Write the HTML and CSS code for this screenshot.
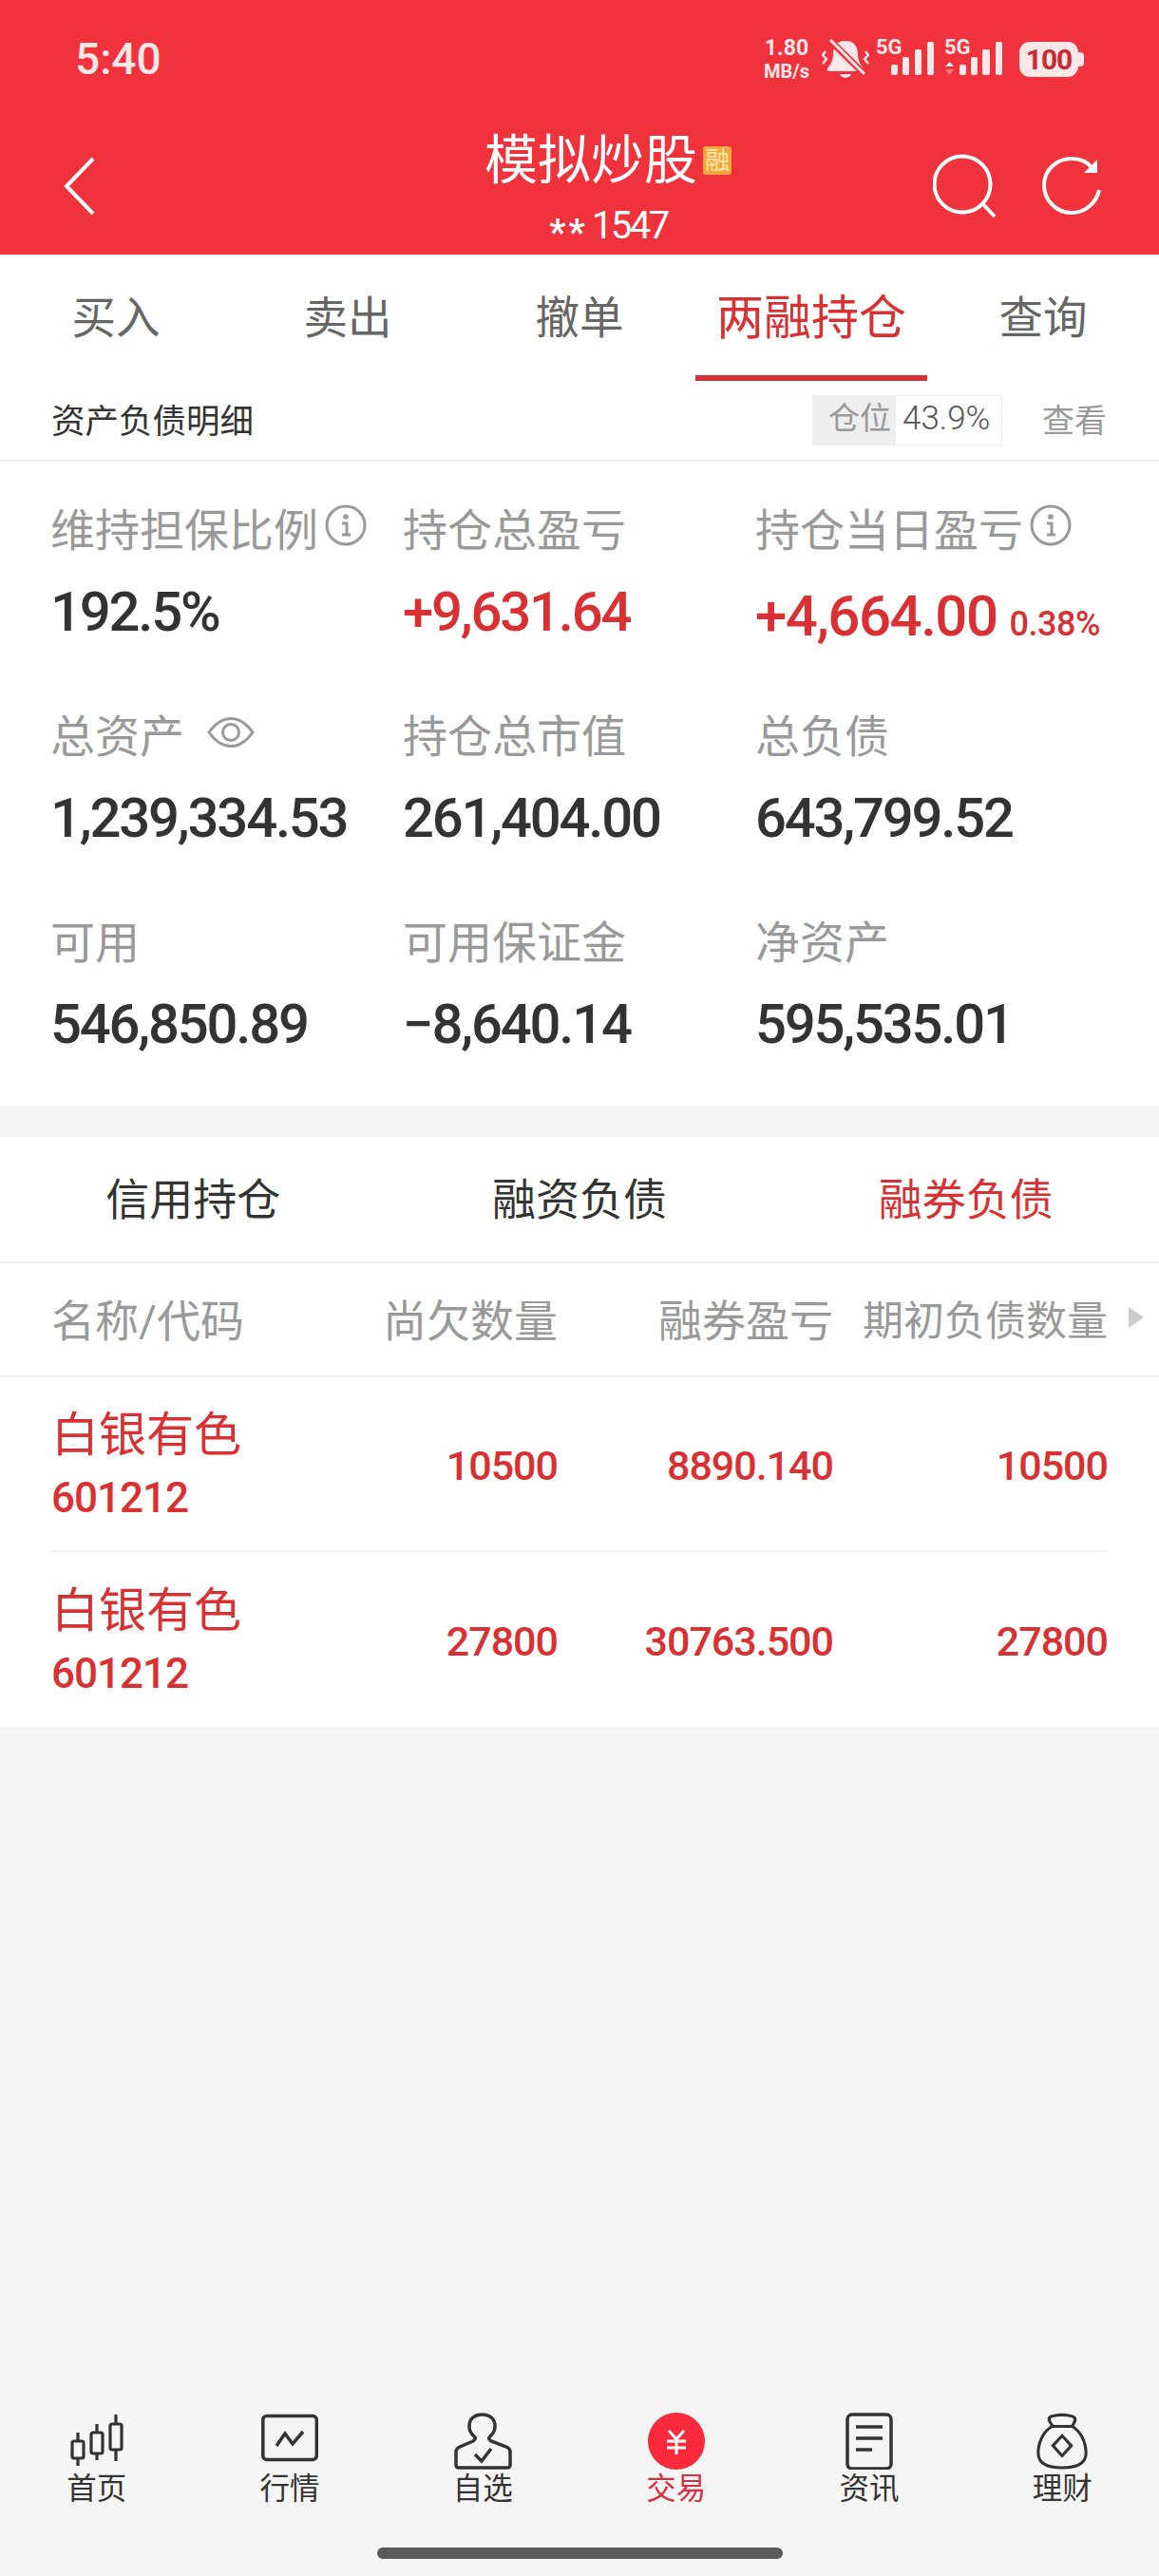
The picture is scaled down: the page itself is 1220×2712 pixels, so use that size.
FILE: index.html
```html
<!DOCTYPE html>
<html lang="zh-CN">
<head>
    <meta charset="UTF-8">
    <title>模拟炒股</title>
    <link rel="stylesheet" href="styles.css">
</head>
<body>
    <header class="top">
        <div class="status">
            <span class="time">5:40</span>
            <div class="status-icons">
                <div class="speed"><span class="speed-num">1.80</span><span class="speed-unit">MB/s</span></div>
                <svg class="bell" width="50" height="42" viewBox="0 0 50 42">
                    <path d="M25 2C16 2 12 8 12 16C12 23 9 27 6 31C5 33 6 34 8 34H42C44 34 45 33 44 31C41 27 38 23 38 16C38 8 34 2 25 2Z" fill="#ffe6e7"/>
                    <path d="M19 37H31C30 42 20 42 19 37Z" fill="#ffe6e7"/>
                    <path d="M7 0L47 39" stroke="#f0323c" stroke-width="7"/>
                    <path d="M9 1L45 37" stroke="#ffe6e7" stroke-width="3"/>
                    <path d="M4 13L1 17L5 21L1 26" stroke="#ffe6e7" stroke-width="2.400" fill="none"/>
                    <path d="M46 13L49 17L45 21L49 26" stroke="#ffe6e7" stroke-width="2.400" fill="none"/>
                </svg>
                <svg class="signal" width="62" height="46" viewBox="0 0 62 46">
                    <text x="0" y="21" class="sig-text">5G</text>
                    <rect x="16" y="32" width="7" height="11" rx="2"/>
                    <rect x="28" y="24" width="7" height="19" rx="2"/>
                    <rect x="41" y="16" width="7" height="27" rx="2"/>
                    <rect x="54" y="8" width="7" height="35" rx="2"/>
                </svg>
                <svg class="signal" width="62" height="46" viewBox="0 0 62 46">
                    <text x="0" y="21" class="sig-text">5G</text>
                    <path d="M1 34L5.500 29L10 34Z"/>
                    <path d="M1 37L5.500 43L10 37Z" opacity="0.45"/>
                    <rect x="16" y="32" width="7" height="11" rx="2"/>
                    <rect x="28" y="24" width="7" height="19" rx="2"/>
                    <rect x="40" y="16" width="8" height="27" rx="2"/>
                    <rect x="54" y="8" width="7" height="35" rx="2"/>
                </svg>
                <div class="battery"><span class="battery-num">100</span></div>
            </div>
        </div>
        <div class="navbar">
            <svg class="back" width="34" height="62" viewBox="0 0 34 62">
                <path d="M31 2L3 31L31 60" fill="none" stroke="#fff" stroke-width="4"/>
            </svg>
            <div class="title-block">
                <div class="title-row">
                    <span class="title">模拟炒股</span>
                    <span class="badge">融</span>
                </div>
                <div class="account"><span class="mask">**</span>1547</div>
            </div>
            <div class="nav-actions">
                <svg width="68" height="68" viewBox="0 0 68 68">
                    <circle cx="31" cy="32" r="29.500" fill="none" stroke="#fff" stroke-width="4"/>
                    <path d="M53 53L65 66" stroke="#fff" stroke-width="4"/>
                </svg>
                <svg width="64" height="66" viewBox="0 0 64 66">
                    <path d="M61 38C58 52 46 62 32 62C16 62 3 49 3 33C3 17 16 5 32 5C41 5 49 9 54 15" fill="none" stroke="#fff" stroke-width="4"/>
                    <path d="M59 6V20H45Z" fill="#fff"/>
                </svg>
            </div>
        </div>
    </header>

    <nav class="tabs">
        <a class="tab">买入</a>
        <a class="tab">卖出</a>
        <a class="tab">撤单</a>
        <a class="tab tab-on">两融持仓</a>
        <a class="tab">查询</a>
    </nav>

    <section class="assets">
        <div class="assets-head">
            <span class="assets-title">资产负债明细</span>
            <div class="position">
                <span class="position-label">仓位</span>
                <span class="position-value">43.9%</span>
            </div>
            <span class="view">查看</span>
        </div>
        <div class="stats">
            <div class="stat">
                <div class="label">维持担保比例
                    <svg class="info" width="44" height="44" viewBox="0 0 44 44">
                        <circle cx="22" cy="22" r="20" fill="none" stroke="#999" stroke-width="3"/>
                        <circle cx="22" cy="13" r="2.800" fill="#999"/>
                        <path d="M18 20H23V31M18 32H27" fill="none" stroke="#999" stroke-width="3"/>
                    </svg>
                </div>
                <div class="value">192.5%</div>
            </div>
            <div class="stat">
                <div class="label">持仓总盈亏</div>
                <div class="value up">+9,631.64</div>
            </div>
            <div class="stat">
                <div class="label">持仓当日盈亏
                    <svg class="info" width="44" height="44" viewBox="0 0 44 44">
                        <circle cx="22" cy="22" r="20" fill="none" stroke="#999" stroke-width="3"/>
                        <circle cx="22" cy="13" r="2.800" fill="#999"/>
                        <path d="M18 20H23V31M18 32H27" fill="none" stroke="#999" stroke-width="3"/>
                    </svg>
                </div>
                <div class="value up value-today">+4,664.00<span class="percent">0.38%</span></div>
            </div>
            <div class="stat">
                <div class="label">总资产
                    <svg class="eye" width="50" height="34" viewBox="0 0 50 34">
                        <path d="M2 17C9 7 16 2.500 25 2.500C34 2.500 41 7 48 17C41 27 34 31.500 25 31.500C16 31.500 9 27 2 17Z" fill="none" stroke="#999" stroke-width="3"/>
                        <circle cx="25" cy="17" r="8.500" fill="none" stroke="#999" stroke-width="3"/>
                    </svg>
                </div>
                <div class="value">1,239,334.53</div>
            </div>
            <div class="stat">
                <div class="label">持仓总市值</div>
                <div class="value">261,404.00</div>
            </div>
            <div class="stat">
                <div class="label">总负债</div>
                <div class="value">643,799.52</div>
            </div>
            <div class="stat">
                <div class="label">可用</div>
                <div class="value">546,850.89</div>
            </div>
            <div class="stat">
                <div class="label">可用保证金</div>
                <div class="value">−8,640.14</div>
            </div>
            <div class="stat">
                <div class="label">净资产</div>
                <div class="value">595,535.01</div>
            </div>
        </div>
    </section>

    <section class="holdings">
        <div class="subtabs">
            <a class="subtab">信用持仓</a>
            <a class="subtab">融资负债</a>
            <a class="subtab subtab-on">融券负债</a>
        </div>
        <div class="row row-head">
            <span>名称/代码</span>
            <span class="num">尚欠数量</span>
            <span class="num">融券盈亏</span>
            <span class="num last-head">期初负债数量</span>
            <i class="more"></i>
        </div>
        <div class="row row-item">
            <div class="stock">
                <div class="stock-name">白银有色</div>
                <div class="stock-code">601212</div>
            </div>
            <span class="num">10500</span>
            <span class="num">8890.140</span>
            <span class="num">10500</span>
        </div>
        <div class="row row-item">
            <div class="stock">
                <div class="stock-name">白银有色</div>
                <div class="stock-code">601212</div>
            </div>
            <span class="num">27800</span>
            <span class="num">30763.500</span>
            <span class="num">27800</span>
        </div>
    </section>

    <footer class="bottom">
        <nav class="dock">
            <a class="dock-item">
                <svg width="60" height="60" viewBox="0 0 60 60" fill="none" stroke="#333" stroke-width="3.200">
                    <path d="M10 21V30M10 48V56M30 12V21M30 43V50M50 2V12M50 39V51"/>
                    <rect x="4" y="30" width="12" height="18" rx="2"/>
                    <rect x="24" y="21" width="12" height="22" rx="2"/>
                    <rect x="44" y="12" width="12" height="27" rx="2"/>
                </svg>
                <span>首页</span>
            </a>
            <a class="dock-item">
                <svg width="60" height="60" viewBox="0 0 60 60" fill="none" stroke="#333" stroke-width="3.500">
                    <rect x="1.800" y="3.500" width="56.500" height="46" rx="4"/>
                    <path d="M16 35L25 22L33 33L44 20"/>
                </svg>
                <span>行情</span>
            </a>
            <a class="dock-item">
                <svg width="63" height="60" viewBox="0 0 63 60" fill="none" stroke="#333" stroke-width="3.500">
                    <path d="M3 55V41Q3 38 7 36L21 30Q24 28 23 26Q17 21 17 15V14C17 6 23 2 30.500 2C38 2 44 6 44 14V15Q44 21 38 26Q37 28 40 30L56 36Q60 38 60 41V55Q60 58 57 58H6Q3 58 3 55Z"/>
                    <path d="M23 44L30 51L40 38"/>
                </svg>
                <span>自选</span>
            </a>
            <a class="dock-item dock-on">
                <svg width="60" height="60" viewBox="0 0 60 60">
                    <circle cx="30" cy="30" r="30" fill="#f92a3b"/>
                    <path d="M22 19L30 28L38 19M20 30H40M20 37H40M30 28V44" fill="none" stroke="#fff" stroke-width="3"/>
                </svg>
                <span>交易</span>
            </a>
            <a class="dock-item">
                <svg width="60" height="60" viewBox="0 0 60 60" fill="none" stroke="#333" stroke-width="3.500">
                    <rect x="7" y="2" width="46" height="57" rx="5"/>
                    <path d="M16 15H44M16 27H44M16 39H33"/>
                </svg>
                <span>资讯</span>
            </a>
            <a class="dock-item">
                <svg width="60" height="60" viewBox="0 0 60 62" fill="none" stroke="#333" stroke-width="3.200">
                    <path d="M19 15C10 20 4 32 4 44C4 56 14 60 30 60C46 60 56 56 56 44C56 32 50 20 41 15Z"/>
                    <path d="M20 15L16 9Q15 5 19 4Q30 1 41 4Q45 5 44 9L41 15"/>
                    <path d="M30 25L40 36L30 47L20 36Z"/>
                </svg>
                <span>理财</span>
            </a>
        </nav>
        <div class="home-bar"></div>
    </footer>
</body>
</html>
```

FILE: styles.css
```css
* {
    box-sizing: border-box;
}
html, body {
    margin: 0;
    padding: 0;
}
body {
    width: 1220px;
    height: 2712px;
    display: flex;
    flex-direction: column;
    overflow: hidden;
    background-color: #f5f5f5;
    font-family: Roboto, "Noto Sans CJK SC", sans-serif;
    color: #333;
}

/* header */
.top {
    height: 268px;
    background-color: #f0323c;
    color: #fff;
}
.status {
    height: 124px;
    display: flex;
    justify-content: space-between;
    align-items: center;
    padding: 0 79px 0 79px;
}
.time {
    font-size: 46px;
    font-weight: 500;
    color: #ffe6e7;
}
.status-icons {
    display: flex;
    align-items: center;
    color: #ffe6e7;
}
.speed {
    display: flex;
    flex-direction: column;
    align-items: center;
    width: 52px;
    margin-right: 11px;
    font-weight: 700;
}
.speed-num {
    font-size: 23px;
    line-height: 26px;
}
.speed-unit {
    font-size: 20px;
    line-height: 22px;
}
.bell {
    margin-right: 7px;
}
.signal {
    margin-right: 10px;
    margin-bottom: 6px;
    fill: #ffe6e7;
}
.sig-text {
    font-size: 22px;
    font-weight: 700;
}
.battery {
    position: relative;
    width: 62px;
    height: 37px;
    margin-left: 7px;
    margin-right: 6px;
    border-radius: 11px;
    background-color: #ffe6e7;
    text-align: center;
}
.battery::after {
    content: "";
    position: absolute;
    right: -6px;
    top: 11px;
    width: 6px;
    height: 15px;
    border-radius: 0 4px 4px 0;
    background-color: #ffe6e7;
}
.battery-num {
    font-size: 30px;
    line-height: 37px;
    font-weight: 700;
    letter-spacing: -1px;
    color: #c62b35;
}
.navbar {
    display: grid;
    grid-template-columns: 443px 261px 1fr;
    padding: 0 60px 0 67px;
}
.back {
    margin-top: 41px;
}
.title-block {
    text-align: center;
}
.title-row {
    display: flex;
    align-items: center;
    height: 90px;
}
.title {
    font-size: 56px;
    line-height: 90px;
}
.badge {
    width: 30px;
    height: 30px;
    margin-left: 6px;
    border-radius: 3px;
    background-color: #f6a53f;
    color: #ffe9a8;
    font-size: 26px;
    line-height: 30px;
    text-align: center;
}
.account {
    font-size: 40px;
    line-height: 48px;
    letter-spacing: -2.500px;
}
.mask {
    margin-right: 4px;
    font-size: 38px;
    font-weight: 700;
    letter-spacing: 3px;
    vertical-align: -7px;
}
.nav-actions {
    display: flex;
    justify-content: flex-end;
    gap: 46px;
    padding-top: 38px;
}

/* tabs */
.tabs {
    display: flex;
    height: 133px;
    background-color: #fff;
}
.tab {
    width: 244px;
    padding-top: 33px;
    text-align: center;
    font-size: 46.500px;
    line-height: 68px;
    color: #666;
}
.tab-on {
    font-size: 50px;
    color: #d93033;
    border-bottom: 6px solid #d93033;
}

/* assets */
.assets {
    background-color: #fff;
}
.assets-head {
    display: flex;
    align-items: center;
    height: 85px;
    padding: 0 55px 4px 54px;
    border-bottom: 2px solid #eee;
}
.assets-title {
    font-size: 35.500px;
    margin-right: auto;
}
.position {
    display: flex;
    width: 200px;
    height: 53px;
    margin-top: 3px;
    border: 1px solid #eee;
    font-size: 33px;
    line-height: 47px;
}
.position-label {
    width: 87px;
    padding-right: 5px;
    background-color: #eee;
    color: #999;
    text-align: right;
}
.position-value {
    padding-left: 7px;
    color: #555;
    font-weight: 300;
    font-size: 35px;
}
.view {
    margin-left: 42px;
    font-size: 34px;
    color: #999;
}
.stats {
    display: grid;
    grid-template-columns: 371px 371px 1fr;
    row-gap: 62px;
    padding: 38px 0 51px 53px;
}
.label {
    display: flex;
    align-items: center;
    height: 60px;
    font-size: 47px;
    color: #999;
}
.info {
    margin-left: 7px;
    margin-top: -2px;
}
.eye {
    margin-left: 24px;
}
.value {
    height: 70px;
    margin-top: 25px;
    font-size: 58px;
    line-height: 70px;
    font-weight: 500;
    letter-spacing: -2.200px;
    white-space: nowrap;
    color: #333;
}
.up {
    color: #d93033;
}
.value-today {
    height: 65px;
    margin-top: 30px;
    font-size: 60px;
    letter-spacing: -1.500px;
}
.percent {
    margin-left: 13px;
    font-size: 36px;
    letter-spacing: -0.500px;
}

/* holdings */
.holdings {
    margin-top: 33px;
    background-color: #fff;
}
.subtabs {
    display: flex;
    height: 133px;
    border-bottom: 2px solid #eee;
}
.subtab {
    flex: 1;
    text-align: center;
    font-size: 46px;
    line-height: 133px;
    color: #333;
}
.subtab-on {
    color: #d93033;
}
.row {
    display: grid;
    grid-template-columns: 300px 233px 290px 289px;
    align-items: center;
    margin: 0 54px;
}
.row-head {
    position: relative;
    height: 120px;
    margin: 0;
    padding: 0 54px 5px;
    border-bottom: 2px solid #eee;
    font-size: 46px;
    color: #999;
}
.last-head {
    font-size: 43px;
    white-space: nowrap;
}
.more {
    position: absolute;
    left: 1188px;
    top: 46px;
    border-left: 16px solid #ccc;
    border-top: 11px solid transparent;
    border-bottom: 11px solid transparent;
}
.row-item {
    height: 184px;
    border-bottom: 2px solid #eee;
    color: #d93033;
}
.row-item:last-child {
    border-bottom: none;
}
.stock-name {
    font-size: 50px;
    line-height: 66px;
}
.stock-code {
    margin-top: 6px;
    font-size: 44px;
    line-height: 54px;
    font-weight: 500;
    letter-spacing: -1px;
}
.num {
    text-align: right;
}
.row-item .num {
    padding-top: 3px;
    font-size: 43px;
    font-weight: 500;
    letter-spacing: -1px;
}

/* bottom */
.bottom {
    margin-top: auto;
    padding-bottom: 18px;
}
.dock {
    display: grid;
    grid-template-columns: repeat(6, 1fr);
}
.dock-item {
    display: flex;
    flex-direction: column;
    align-items: center;
    font-size: 31.500px;
    line-height: 42px;
    color: #333;
}
.dock-on {
    color: #d9303f;
}
.home-bar {
    width: 427px;
    height: 12px;
    margin: 40px auto 0;
    border-radius: 6px;
    background-color: #5a5a5a;
}
```
